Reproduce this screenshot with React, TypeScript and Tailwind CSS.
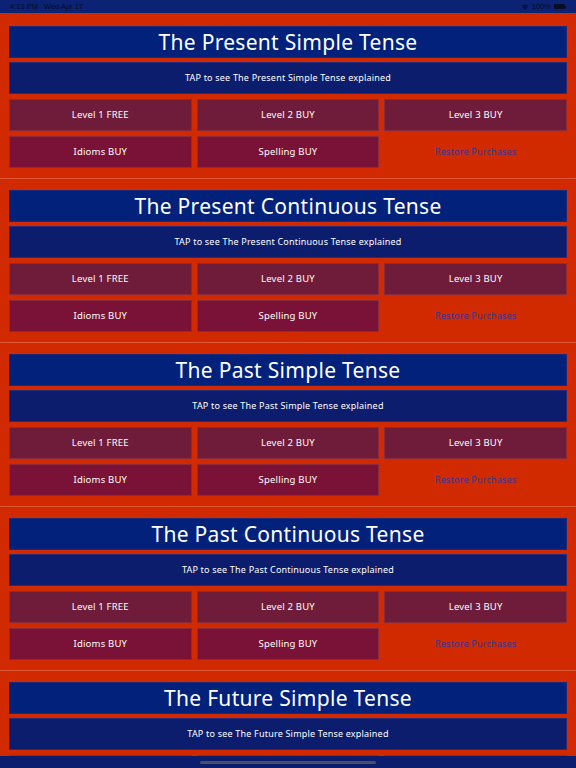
const tenses = [
  "The Present Simple Tense",
  "The Present Continuous Tense",
  "The Past Simple Tense",
  "The Past Continuous Tense",
  "The Future Simple Tense",
];

const font = { fontFamily: '"Noto Sans", "DejaVu Sans", sans-serif' };

function StatusBar() {
  return (
    <div className="h-[13px] bg-[#0b2275] flex items-center justify-between px-[10px] text-[7.5px] leading-none text-[#080c22] font-[Liberation_Sans]">
      <div className="flex gap-[6px]">
        <span>4:13 PM</span>
        <span>Wed Apr 17</span>
      </div>
      <div className="flex items-center gap-[3px]">
        <svg width="8" height="6" viewBox="0 0 16 12" fill="#080c22">
          <path d="M8 12 L5.5 9 A4 4 0 0 1 10.5 9 Z" />
          <path d="M3.5 6.8 A7 7 0 0 1 12.5 6.8 L11.2 8.2 A5 5 0 0 0 4.8 8.2 Z" />
          <path d="M1.2 4.4 A10.5 10.5 0 0 1 14.8 4.4 L13.6 5.7 A8.7 8.7 0 0 0 2.4 5.7 Z" />
        </svg>
        <span>100%</span>
        <div className="flex items-center">
          <div className="w-[11px] h-[5px] rounded-[1px] bg-[#080c22]" />
          <div className="w-[1px] h-[2px] bg-[#080c22]" />
        </div>
      </div>
    </div>
  );
}

function Section({ name }: { name: string }) {
  return (
    <div className="pt-[11px] pb-[10px] border-b border-[#e0583a] px-[9px] flex flex-col">
      <div className="h-[32px] pt-[2px] bg-[#01217a] border border-[#1b2a7a] flex items-center justify-center text-white text-[21px] tracking-[0.3px]">
        {name}
      </div>
      <div className="mt-[4px] h-[32px] bg-[#0c1d6e] border border-[#2a2a7a] flex items-center justify-center text-white text-[9px] tracking-[0.2px]">
        TAP to see {name} explained
      </div>
      <div className="mt-[5px] grid grid-cols-3 gap-x-[5px] gap-y-[5px] text-white text-[9.5px] tracking-[0.2px]">
        <div className="h-[32px] bg-[#6e1c3a] border border-[#8a2a3a] flex items-center justify-center">Level 1 FREE</div>
        <div className="h-[32px] bg-[#6e1c3a] border border-[#8a2a3a] flex items-center justify-center">Level 2 BUY</div>
        <div className="h-[32px] bg-[#6e1c3a] border border-[#8a2a3a] flex items-center justify-center">Level 3 BUY</div>
        <div className="h-[32px] bg-[#7a1238] border border-[#8a2a3a] flex items-center justify-center">Idioms BUY</div>
        <div className="h-[32px] bg-[#7a1238] border border-[#8a2a3a] flex items-center justify-center">Spelling BUY</div>
        <div className="h-[32px] flex items-center justify-center text-[#3b3592] text-[9px]">Restore Purchases</div>
      </div>
    </div>
  );
}

export default function App() {
  return (
    <div className="w-[576px] h-[768px] overflow-hidden relative bg-[#d22a00]" style={font}>
      <StatusBar />
      <div className="pt-[2px]">
        {tenses.map((t) => (
          <Section key={t} name={t} />
        ))}
      </div>
      <div className="absolute bottom-0 left-0 right-0 h-[12px] bg-[#0c1d6e] flex items-center justify-center">
        <div className="w-[176px] h-[3px] rounded-full bg-[#4a4f66]" />
      </div>
    </div>
  );
}
